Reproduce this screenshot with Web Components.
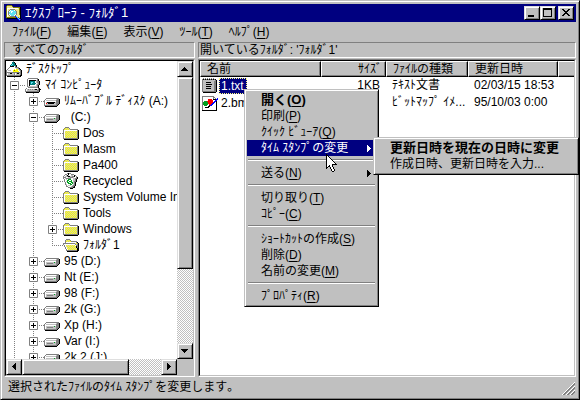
<!DOCTYPE html>
<html lang="ja">
<head>
<meta charset="utf-8">
<title>ｴｸｽﾌﾟﾛｰﾗ - ﾌｫﾙﾀﾞ1</title>
<style>
  html, body { margin: 0; height: 100%; }
  body {
    --face: #c0c0c0; --shade: #808080; --navy: #000080;
    position: relative; overflow: hidden; background: var(--face); color: #000;
    font: 12px/16px "Liberation Sans", "Noto Sans CJK JP", sans-serif;
  }
  .panes { display: grid; grid-template-columns: 191px minmax(0, 1fr); gap: 3px; min-height: 0; flex: 1; }
  .menu { position: absolute; left: 244px; top: 89px; }
</style>
</head>
<body>
<app-window heading="ｴｸｽﾌﾟﾛｰﾗ - ﾌｫﾙﾀﾞ1">
  <menu-bar slot="menu">
    <menu-button key="F">ﾌｧｲﾙ</menu-button>
    <menu-button key="E">編集</menu-button>
    <menu-button key="V">表示</menu-button>
    <menu-button key="T">ﾂｰﾙ</menu-button>
    <menu-button key="H">ﾍﾙﾌﾟ</menu-button>
  </menu-bar>
  <div class="panes">
    <explorer-pane heading="すべてのﾌｫﾙﾀﾞ">
      <scroll-area>
        <tree-row icon="desktop">ﾃﾞｽｸﾄｯﾌﾟ</tree-row>
        <tree-row guides="-" icon="computer">ﾏｲ ｺﾝﾋﾟｭｰﾀ</tree-row>
        <tree-row guides="|+" icon="removable">ﾘﾑｰﾊﾞﾌﾞﾙ ﾃﾞｨｽｸ (A:)</tree-row>
        <tree-row guides="|-" icon="drive">&nbsp; (C:)</tree-row>
        <tree-row guides="||t" icon="folder">Dos</tree-row>
        <tree-row guides="||t" icon="folder">Masm</tree-row>
        <tree-row guides="||t" icon="folder">Pa400</tree-row>
        <tree-row guides="||t" icon="recycle">Recycled</tree-row>
        <tree-row guides="||t" icon="folder">System Volume In</tree-row>
        <tree-row guides="||t" icon="folder">Tools</tree-row>
        <tree-row guides="||+" icon="folder">Windows</tree-row>
        <tree-row guides="||l" icon="open">ﾌｫﾙﾀﾞ1</tree-row>
        <tree-row guides="|+" icon="drive">95 (D:)</tree-row>
        <tree-row guides="|+" icon="drive">Nt (E:)</tree-row>
        <tree-row guides="|+" icon="drive">98 (F:)</tree-row>
        <tree-row guides="|+" icon="drive">2k (G:)</tree-row>
        <tree-row guides="|+" icon="drive">Xp (H:)</tree-row>
        <tree-row guides="|+" icon="drive">Var (I:)</tree-row>
        <tree-row guides="|+" icon="drive">2k 2 (J:)</tree-row>
      </scroll-area>
    </explorer-pane>
    <explorer-pane heading="開いているﾌｫﾙﾀﾞ: 'ﾌｫﾙﾀﾞ1'" tight>
      <file-list></file-list>
    </explorer-pane>
  </div>
  <span slot="status">選択されたﾌｧｲﾙのﾀｲﾑ ｽﾀﾝﾌﾟを変更します｡</span>
</app-window>

<popup-menu class="menu">
  <popup-item key="O" strong>開く</popup-item>
  <popup-item key="P">印刷</popup-item>
  <popup-item key="Q">ｸｲｯｸ ﾋﾞｭｰｱ</popup-item>
  <popup-item active arrow>ﾀｲﾑ ｽﾀﾝﾌﾟの変更
    <popup-menu slot="submenu">
      <popup-item strong>更新日時を現在の日時に変更</popup-item>
      <popup-item>作成日時、更新日時を入力...</popup-item>
    </popup-menu>
  </popup-item>
  <popup-rule></popup-rule>
  <popup-item key="N" arrow>送る</popup-item>
  <popup-rule></popup-rule>
  <popup-item key="T">切り取り</popup-item>
  <popup-item key="C">ｺﾋﾟｰ</popup-item>
  <popup-rule></popup-rule>
  <popup-item key="S">ｼｮｰﾄｶｯﾄの作成</popup-item>
  <popup-item key="D">削除</popup-item>
  <popup-item key="M">名前の変更</popup-item>
  <popup-rule></popup-rule>
  <popup-item key="R">ﾌﾟﾛﾊﾟﾃｨ</popup-item>
</popup-menu>
<mouse-pointer></mouse-pointer>

<script>
const define = (name, build) => customElements.define(name, class extends HTMLElement {
  connectedCallback() {
    if (this.shadowRoot) return;
    const t = document.createElement('template');
    t.innerHTML = build(this);
    this.attachShadow({ mode: 'open' }).append(t.content.cloneNode(true));
  }
});

const RAISED = 'border:1px solid;border-color:#dfdfdf #000 #000 #dfdfdf;box-shadow:inset 1px 1px #fff,inset -1px -1px #808080;background:#c0c0c0;';
const mnemonic = el => el.hasAttribute('key') ? `(<u>${el.getAttribute('key')}</u>)` : '';

/* Icons as 16-column pixel maps; "d" is the yellow/grey dither of folders. */
const COLORS = { k: '#000', g: '#808080', c: '#c0c0c0', w: '#fff', y: '#ffff00', p: '#f0e890', t: '#008080', b: '#0000ff', n: '#000080', r: '#ff0000', e: '#00a020', a: '#60e0f0', o: '#808000' };
const ICONS = {
  folder: [
    '', '', '..gggg..........', '.gddddg.........', 'gddddddgggggggg.', 'gwwwwwwwwwwwwwgk', 'gwddddddddddddgk',
    'gwddddddddddddgk', 'gwddddddddddddgk', 'gwddddddddddddgk', 'gwddddddddddddgk', 'gwddddddddddddgk', 'gwddddddddddddgk', 'gggggggggggggggk', '.kkkkkkkkkkkkkk.'],
  open: [
    '', '', '...gggg.........', '..gddddg........', '..gdddddgggggg..', '..gwwwwwwwwwwgk.', 'ggggggggggggddgk',
    'gwwwwwwwwwwwgdgk', '.gwdddddddddwggk', '.gwddddddddddkgk', '..gwdddddddddkgk', '..gwddddddddddkk', '...gwdddddddddkk', '...gggggggggggkk', '....kkkkkkkkkkk.'],
  drive: [
    '', '', '', '', '', '..ggggggggggggg.', '.gwwwwwwwwwwcggk', 'gwccccccccccgggk', 'gwwwwwwwwwwwgggk',
    'gwccccccccecgggk', 'gwcggggggcccgggk', 'gwccccccccccggk.', 'gggggggggggggk..', '.kkkkkkkkkkkk...'],
  removable: [
    '', '', '', '', '', '..ggggggggggggg.', '.gwwwwwwwwwwcggk', 'gwccccccccccgggk', 'gwwwwwwwwwwwgggk',
    'gwckkkkkkkkcgggk', 'gwrckkkkkkccgggk', 'gwccccccccccggk.', 'gggggggggggggk..', '.kkkkkkkkkkkk...'],
  computer: [
    '', '...gggggggggg...', '..gwwwwwwwwwgk..', '..gwkkkkkkkcgk..', '..gwktttttwcggk.', '..gwktaattwcggk.',
    '..gwktattttwcgk.', '..gwktttttwcggk.', '..gwkwwwwwwcgk..', '..gcccccccccgk..', '...ggggggggggk..', '.gwwwwwwwwwwwgk.',
    'gwcgcgcgcgkkcgkk', 'gwccccccccccggk.', 'ggggggggggggggk.', '.kkkkkkkkkkkkk..'],
  desktop: [
    '.......g........', '......ttk.......', '......tttk......', '.....tattk......', '....tattttk.....', '....kkkk.gk.....', '...gwwwwwgggg...',
    '..gwwwwwwwccgk..', '.gwwwwwwywyycgk.', 'gwcccwwyoyyywcgk', 'gwwwwwwyyyyyywgk', 'gggggggggggggggk', 'gwcckkccgwckkcgk',
    'gwccccccgwccccgk', 'ggggggggggggggkk', '.kkkkkkkkkkkkkk.'],
  recycle: [
    '....gkgg........', '..ggwkwwggg.....', '.gwckcwwccwkg...', 'gwccgkkccggkwg..', 'gggwwccgggcwwgk.', 'gwcgggggwwccggk.', '.gwcweeewwccgk..',
    '.gwweewwewccgk..', '.gwceweeewcggk..', '..gweewweecgk...', '..gwweeewecgk...', '..gcwwweewcgk...', '...gwcccwcggk...', '...ggwwwcggk....', '.....gggggkk....', '.......kkk......'],
  text: [
    '.g.g.g.g.g.g....', 'gkgkgkgkgkgkgk..', 'gccccccccccccgk.', 'gcccccccccccggk.', 'gccckkkkkcccggk.', 'gcccccccccccggk.', 'gccckkkkkkccggk.', 'gcccccccccccggk.',
    'gccckkkkkcccggk.', 'gcccccccccccggk.', 'gccckkkkkcccggk.', 'gcccccccccccggk.', 'gcccccccccccggk.', 'ggggggggggggggk.', '.kkkkkkkkkkkkk..'],
  bitmap: [
    '', 'gggggggggggg....', 'gwwwwwwwwwwgg...', 'gwwwwwwwwwwgwg.b', 'gwwwwwrrrrwkkkbb', 'gwwwwwrrrrrwwbb.', 'gweeerrrrrrwbbk.', 'geeeeerrrrrbbwk.',
    'geeeeerrrrbbwwk.', 'geeeeewrrbbwwwk.', 'gweeewwkbbwwwwk.', 'gwwwwwkkwwwwwwk.', 'gwwkkkkwwwwwwwk.', 'gwwwwwwwwwwwwwk.', 'gwwwwwwwwwwwwwk.', 'kkkkkkkkkkkkkkk.'],
  explorer: [
    '.ooooo..........', 'opppppo.........', 'oppppppoooooook.', 'owwwwwwwwwwwpok.', 'owppgggggppppok.', 'owpgwaaawgpppok.', 'owgwawwaaagppok.', 'owgaawaaaagppok.',
    'owgaaaaaaagppok.', 'owgwaaaaawgppok.', 'owpgwaaawgppppk.', 'owppgggggbapppk.', 'oooooooooobaopk.', '.kkkkkkkkkkbabk.', '............babk', '.............bk.'],
  pointer: [
    'k', 'kk', 'kwk', 'kwwk', 'kwwwk', 'kwwwwk', 'kwwwwwk', 'kwwwwwwk', 'kwwwwwwwk', 'kwwwwwwwwk', 'kwwwwwkkkkk', 'kwwkwwk', 'kwkkwwk', 'kk..kwwk', 'k...kwwk', '.....kwwk', '.....kwwk', '......kk'],
};
function drawIcon(name) {
  const map = ICONS[name];
  let rects = '';
  map.forEach((row, y) => [...row].forEach((c, x) => {
    if (c === '.') return;
    const fill = c === 'd' ? ((x + y) % 2 ? '#ffff00' : '#d0d0b0') : COLORS[c];
    rects += `<rect x="${x}" y="${y}" width="1" height="1" fill="${fill}"/>`;
  }));
  const h = Math.max(16, map.length);
  return `<svg viewBox="0 0 16 ${h}" width="16" height="${h}" shape-rendering="crispEdges" aria-hidden="true">${rects}</svg>`;
}
define('pixel-icon', el => `<style>:host{display:block;flex:none;width:16px}svg{display:block}</style>${drawIcon(el.getAttribute('name'))}`);

define('app-window', el => `
<style>
  :host { display: flex; flex-direction: column; height: 100%; box-sizing: border-box; padding: 3px 3px 2px;
    border: 1px solid; border-color: #c0c0c0 #000 #000 #c0c0c0; background: var(--face);
    box-shadow: inset 1px 1px #fff, inset -1px -1px #808080; }
  header { display: flex; align-items: center; height: 18px; padding: 0 2px; background: var(--navy); color: #fff; gap: 3px; }
  h1 { font-size: 13px; font-weight: normal; line-height: 18px; margin: 0; flex: 1; }
  button { width: 16px; height: 14px; padding: 0; ${RAISED} }
  button svg { display: block; }
  .pair { display: flex; margin-right: -1px; }
  footer { height: 20px; padding: 2px 1px 2px 4px; display: flex; justify-content: space-between; box-sizing: border-box; }
  footer svg { align-self: flex-end; flex: none; }
</style>
<header><pixel-icon name="explorer"></pixel-icon><h1>${el.getAttribute('heading')}</h1>
  <div class="pair">
  <button aria-label="最小化"><svg width="14" height="12" shape-rendering="crispEdges"><path d="M3 8h6v2H3z"/></svg></button>
  <button aria-label="最大化"><svg width="14" height="12" shape-rendering="crispEdges"><path fill-rule="evenodd" d="M2 1h9v9H2zM3 3h7v6H3z"/></svg></button>
  </div>
  <button aria-label="閉じる"><svg width="14" height="12" shape-rendering="crispEdges"><path d="M3 2h2v1h1v1h2v-1h1v-1h2v1h-1v1h-1v1h-1v1h1v1h1v1h1v1h-2v-1h-1v-1h-2v1h-1v1h-2v-1h1v-1h1v-1h1v-1h-1v-1h-1v-1h-1z"/></svg></button>
</header>
<slot name="menu"></slot>
<slot></slot>
<footer><slot name="status"></slot>
  <svg width="13" height="13" shape-rendering="crispEdges" aria-hidden="true"><path d="M0 13 13 0M4 13 13 4M8 13 13 8" stroke="#fff"/><path d="M1 13 13 1M2 13 13 2M5 13 13 5M6 13 13 6M9 13 13 9M10 13 13 10" stroke="#808080"/></svg>
</footer>`);

define('menu-bar', () => `<style>:host{display:flex;height:20px;align-items:center;flex:none}</style><slot></slot>`);
define('menu-button', el => `<style>button{display:block;font:inherit;color:inherit;background:none;border:0;padding:0 8px}u{text-underline-offset:2px}</style><button><slot></slot>${mnemonic(el)}</button>`);

define('explorer-pane', el => `
<style>
  :host { display: flex; flex-direction: column; gap: 1px; min-width: 0; min-height: 0; }
  h2 { font: inherit; line-height: 14px; margin: 0; padding: 0 7px; border: 1px solid; border-color: #808080 #fff #fff #808080; white-space: nowrap; }
  :host([tight]) h2 { padding: 0 1px; }
  .well { flex: 1; min-height: 0; border: 1px solid; border-color: #808080 #fff #fff #808080; display: flex; }
  .inner { flex: 1; min-width: 0; border: 1px solid; border-color: #000 #c0c0c0 #c0c0c0 #000; background: #fff; overflow: hidden; }
</style>
<h2>${el.getAttribute('heading')}</h2><div class="well"><div class="inner"><slot></slot></div></div>`);

const arrow = (d, label) => `<button aria-label="${label}"><svg width="14" height="14" shape-rendering="crispEdges"><path d="${d}"/></svg></button>`;
define('scroll-area', () => `
<style>
  :host { display: grid; height: 100%; grid-template: minmax(0, 1fr) 16px / minmax(0, 1fr) 16px; }
  .view { overflow: hidden; }
  .bar { display: flex; background: repeating-conic-gradient(#fff 0 25%, #c0c0c0 0 50%) 0 0 / 2px 2px; }
  .v { flex-direction: column; }
  button { flex: none; box-sizing: border-box; width: 16px; height: 16px; padding: 0; ${RAISED} }
  button svg { display: block; }
  .thumb { ${RAISED} box-sizing: border-box; }
  .v .thumb { flex: 0 0 72%; }
  .h .thumb { flex: 0 0 77%; }
  .track { flex: 1; min-height: 0; display: flex; flex-direction: inherit; }
  .corner { background: var(--face); }
</style>
<div class="view"><slot></slot></div>
<div class="bar v">${arrow('M6 5h1v1h1v1h1v1h1v1H3v-1h1v-1h1v-1h1z', '上へ')}<div class="track"><div class="thumb"></div></div>${arrow('M3 5h7v1H9v1H8v1H7v1H6V8H5V7H4V6H3z', '下へ')}</div>
<div class="bar h">${arrow('M8 3h1v7H8V9H7V8H6V7H5V6h1V5h1V4h1z', '左へ')}<div class="track"><div class="thumb"></div></div>${arrow('M5 3h1v1h1v1h1v1h1v1H8v1H7v1H6v1H5z', '右へ')}</div>
<div class="corner"></div>`);

define('tree-row', el => {
  const cells = [...(el.getAttribute('guides') || '')].map(g => {
    const line = `<path d="M8.5 0V${g === 'l' ? 9 : 16}" stroke="#808080" stroke-dasharray="1 1"/>`;
    const stub = g === '|' ? '' : '<path d="M8 8.5H19" stroke="#808080" stroke-dasharray="1 1"/>';
    const box = '+-'.includes(g) ? `<path d="M4.5 4.5h8v8h-8z" fill="#fff" stroke="#808080"/><path d="M6 8.5h5${g === '+' ? 'M8.5 6v5' : ''}" stroke="#000"/>` : '';
    return `<svg width="19" height="16" aria-hidden="true">${line}${stub}${box}</svg>`;
  }).join('');
  return `<style>:host{display:flex;height:16px;white-space:pre}svg{display:block;flex:none}span{padding-left:4px}</style>${cells}<pixel-icon name="${el.getAttribute('icon')}"></pixel-icon><span><slot></slot></span>`;
});

define('file-list', () => `
<style>
  :host { display: block; }
  table { width: 100%; table-layout: fixed; border-collapse: separate; border-spacing: 0; }
  th { box-sizing: border-box; height: 16px; line-height: 13px; font-weight: normal; text-align: left; padding: 0 6px; white-space: nowrap;
    background: var(--face); border: 1px solid; border-color: #fff #000 #000 #fff; box-shadow: inset -1px -1px #808080; }
  th:last-child { border-right: 0; box-shadow: inset 0 -1px #808080; }
  td { height: 17px; line-height: 17px; padding: 0 6px; white-space: nowrap; overflow: hidden; }
  td.name { padding: 0 2px; }
  .file { display: flex; align-items: center; gap: 1px; }
  .file span { line-height: 16px; padding: 0 2px; }
  .file .on { background: var(--navy); color: #fff; outline: 1px dotted #ffff80; outline-offset: -1px; padding-right: 3px; }
  .num { text-align: right; }
  th.num { padding-right: 3px; }
</style>
<table>
  <colgroup><col style="width:121px"><col style="width:65px"><col style="width:82px"><col style="width:90px"><col></colgroup>
  <thead><tr><th>名前</th><th class="num">ｻｲｽﾞ</th><th>ﾌｧｲﾙの種類</th><th>更新日時</th><th></th></tr></thead>
  <tbody>
    <tr><td class="name"><div class="file"><pixel-icon name="text"></pixel-icon><span class="on">1.txt</span></div></td><td class="num">1KB</td><td>ﾃｷｽﾄ文書</td><td>02/03/15 18:53</td><td></td></tr>
    <tr><td class="name"><div class="file"><pixel-icon name="bitmap"></pixel-icon><span>2.bmp</span></div></td><td></td><td>ﾋﾞｯﾄﾏｯﾌﾟ ｲﾒ...</td><td>95/10/03 0:00</td><td></td></tr>
  </tbody>
</table>`);

define('popup-menu', () => `
<style>
  :host { display: block; box-sizing: border-box; min-width: 135px; ${RAISED} border-color: #c0c0c0 #000 #000 #c0c0c0; padding: 2px; color: #000; }
</style><slot></slot>`);
define('popup-item', el => `
<style>
  :host { display: block; position: relative; }
  button { display: flex; align-items: center; width: 100%; height: 16px; padding: 0 5px 0 14px; border: 0; font: inherit; line-height: 16px;
    color: inherit; background: none; white-space: nowrap; text-align: left; }
  span { flex: 1; }
  :host([strong]) button { font-size: 13px; font-weight: bold; }
  :host([active]) button { background: var(--navy); color: #fff; }
  u { text-underline-offset: 2px; }
  ::slotted(popup-menu) { position: absolute; left: 126px; top: -3px; width: 206px; }
</style>
<button role="menuitem"><span><slot></slot>${mnemonic(el)}</span>${el.hasAttribute('arrow') ? '<svg width="4" height="7" shape-rendering="crispEdges" aria-hidden="true"><path fill="currentColor" d="M0 0h1v1h1v1h1v1h1v1H3v1H2v1H1v1H0z"/></svg>' : ''}</button><slot name="submenu"></slot>`);
define('popup-rule', () => `<style>:host{display:flow-root;height:9px}hr{margin:3px 1px 0;border:0;border-top:1px solid #808080;border-bottom:1px solid #fff}</style><hr>`);
define('mouse-pointer', () => `<style>:host{position:absolute;left:326px;top:154px;pointer-events:none}svg{display:block}</style>${drawIcon('pointer')}`);
</script>
</body>
</html>
